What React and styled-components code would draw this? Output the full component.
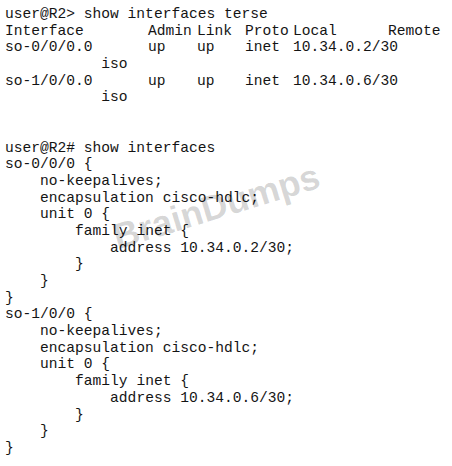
import React from 'react';
import styled, { createGlobalStyle } from 'styled-components';

const GlobalStyle = createGlobalStyle`
  html, body {
    margin: 0;
    padding: 0;
    background: #fff;
  }
`;

// styles
const Screen = styled.div`
  position: relative;
  width: 452px;
  height: 466px;
  overflow: hidden;
  padding: 6px 0 0 5px;
  box-sizing: border-box;
  font-family: 'Courier New', Courier, 'Nimbus Mono PS', 'FreeMono', 'Liberation Mono', monospace;
  font-size: 14.6px;
  line-height: 16.7px;
  color: #141414;
`;

const Line = styled.div`
  white-space: pre;
  height: 16.7px;
  padding-left: ${(p) => (p.indent || 0) * 8.76}px;
`;

const TerseRow = styled.div`
  display: grid;
  grid-template-columns: 143px 49px 48px 48px 95px auto;
  white-space: pre;
  height: 16.7px;
`;

const Spacer = styled.div`
  height: ${(p) => p.lines * 16.7}px;
`;

const Watermark = styled.div`
  position: absolute;
  left: 114px;
  top: 220px;
  font-family: 'Liberation Sans', Arial, sans-serif;
  font-weight: 700;
  font-size: 36px;
  line-height: 1;
  color: rgba(0, 0, 0, 0.17);
  transform: rotate(-17deg);
  transform-origin: left center;
  pointer-events: none;
`;

const rows = [
  ['so-0/0/0.0', 'up', 'up', 'inet', '10.34.0.2/30'],
  ['so-1/0/0.0', 'up', 'up', 'inet', '10.34.0.6/30'],
];

const Config = ({ name, address }) => (
  <>
    <Line>{`${name} {`}</Line>
    <Line indent={4}>no-keepalives;</Line>
    <Line indent={4}>encapsulation cisco-hdlc;</Line>
    <Line indent={4}>{'unit 0 {'}</Line>
    <Line indent={8}>{'family inet {'}</Line>
    <Line indent={12}>{`address ${address};`}</Line>
    <Line indent={8}>{'}'}</Line>
    <Line indent={4}>{'}'}</Line>
    <Line>{'}'}</Line>
  </>
);

const App = () => (
  <Screen>
    <GlobalStyle />
    <Line>user@R2&gt; show interfaces terse</Line>
    <TerseRow>
      <span>Interface</span>
      <span>Admin</span>
      <span>Link</span>
      <span>Proto</span>
      <span>Local</span>
      <span>Remote</span>
    </TerseRow>
    {rows.map((r) => (
      <React.Fragment key={r[0]}>
        <TerseRow>
          {r.map((c, i) => (
            <span key={i}>{c}</span>
          ))}
        </TerseRow>
        <Line indent={11}>iso</Line>
      </React.Fragment>
    ))}
    <Spacer lines={2} />
    <Line>user@R2# show interfaces</Line>
    <Config name="so-0/0/0" address="10.34.0.2/30" />
    <Config name="so-1/0/0" address="10.34.0.6/30" />
    <Watermark>BrainDumps</Watermark>
  </Screen>
);

export default App;
